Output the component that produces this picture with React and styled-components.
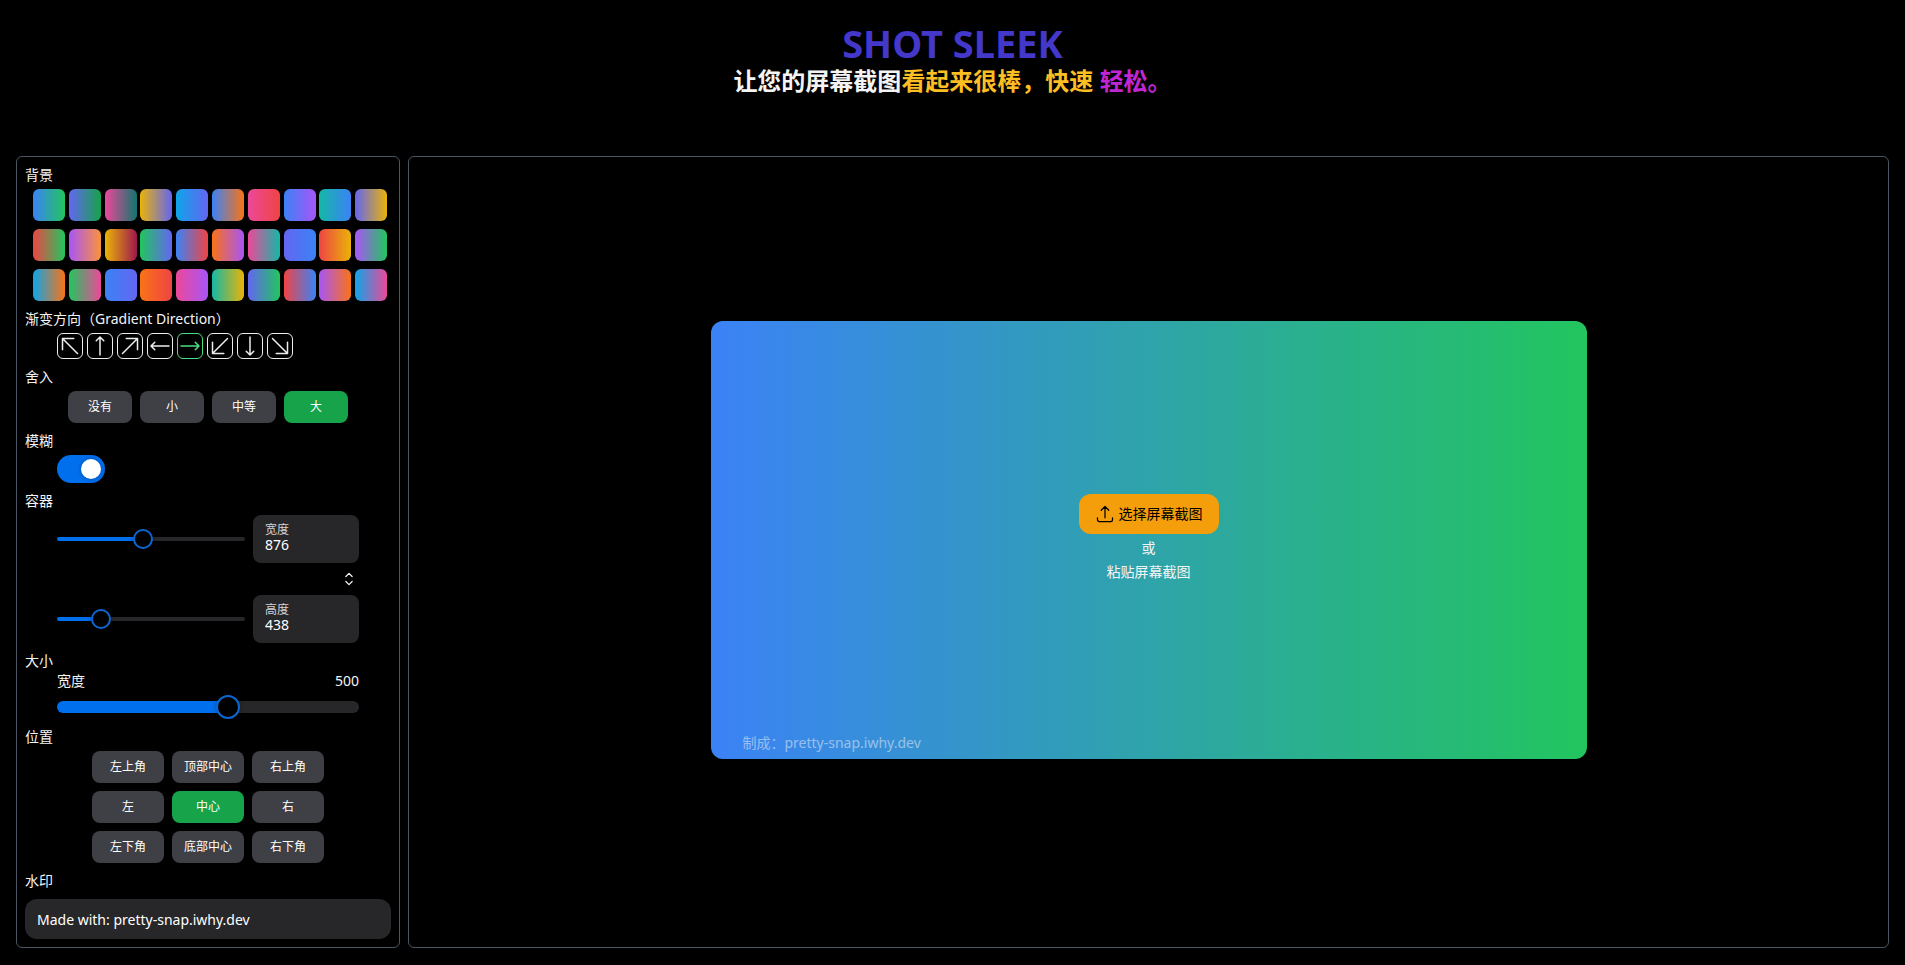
import React, { useState } from "react";
import styled, { createGlobalStyle } from "styled-components";

const GlobalStyle = createGlobalStyle`
  *, *::before, *::after { box-sizing: border-box; }
  body {
    margin: 0;
    background: #000;
    color: #f4f4f5;
    font-family: "Noto Sans", "Noto Sans CJK SC", sans-serif;
    font-size: 14px;
    line-height: 20px;
  }
  button, input { font: inherit; color: inherit; }
  h1, h2, p, fieldset { margin: 0; padding: 0; border: 0; min-width: 0; }
  button { cursor: pointer; padding: 0; border: 0; }
`;

const Page = styled.div`
  padding: 23px 16px 16px;
`;

const Header = styled.header`
  display: flex;
  flex-direction: column;
  align-items: center;
  margin-bottom: 57px;
  font-weight: 700;
`;

const Title = styled.h1`
  color: #4338ca;
  font-size: 38px;
  line-height: 40px;
  font-weight: 700;
`;

const Tagline = styled.h2`
  font-size: 24px;
  line-height: 36px;
  font-weight: 700;
`;

const Tint = styled.span`
  color: ${(p) => p.$color};
`;

const Workspace = styled.div`
  display: grid;
  grid-template-columns: 384px minmax(0, 1fr);
  gap: 8px;
`;

const Panel = styled.section`
  border: 1px solid #4b5563;
  border-radius: 6px;
`;

const Sidebar = styled(Panel)`
  display: flex;
  flex-direction: column;
  gap: 8px;
  padding: 8px;
`;

const Stage = styled(Panel)`
  display: flex;
  align-items: center;
  justify-content: center;
  padding-bottom: 24px;
`;

const Field = styled.fieldset`
  display: flex;
  flex-direction: column;
`;

const Legend = styled.legend`
  padding: 0;
  margin-bottom: ${(p) => p.$gap ?? 4}px;
`;

const Swatches = styled.div`
  display: grid;
  grid-template-columns: repeat(10, 1fr);
  row-gap: 8px;
  padding-left: 8px;
`;

const Swatch = styled.button`
  width: 32px;
  height: 32px;
  border-radius: 6px;
  background: linear-gradient(to right, ${(p) => p.$from}, ${(p) => p.$to});
`;

const Directions = styled.div`
  display: flex;
  gap: 4px;
  padding-left: 32px;
`;

const DirectionButton = styled.button`
  display: flex;
  width: 26px;
  height: 26px;
  border: 1px solid currentColor;
  border-radius: 6px;
  background: none;
  color: ${(p) => (p.$active ? "#4ade80" : "#ecedee")};
`;

const Options = styled.div`
  display: grid;
  grid-template-columns: repeat(${(p) => p.$columns}, ${(p) => p.$width}px);
  justify-content: center;
  gap: 8px;
`;

const OptionButton = styled.button`
  height: 32px;
  border-radius: 8px;
  background: ${(p) => (p.$active ? "#16a34a" : "#3f3f46")};
  color: #fff;
  font-size: 12px;
  line-height: 16px;
`;

const Indent = styled.div`
  display: flex;
  flex-direction: column;
  padding: 0 32px;
`;

const Switch = styled.input`
  appearance: none;
  display: flex;
  align-items: center;
  width: 48px;
  height: 28px;
  margin: 0;
  padding: 0 4px;
  border-radius: 14px;
  background: #3f3f46;
  cursor: pointer;

  &::before {
    content: "";
    width: 20px;
    height: 20px;
    border-radius: 50%;
    background: #fff;
    box-shadow: 0 0 5px rgba(0, 0, 0, 0.3);
  }
  &:checked {
    justify-content: flex-end;
    background: #006fee;
  }
`;

const Range = styled.input`
  --thumb: ${(p) => p.$thumb}px;
  --track: ${(p) => p.$track}px;
  --stop: calc(var(--thumb) / 2 + (100% - var(--thumb)) * var(--fill));
  appearance: none;
  flex: 1;
  min-width: 0;
  height: var(--thumb);
  margin: 0;
  background: none;
  cursor: pointer;

  &::-webkit-slider-runnable-track {
    height: var(--track);
    border-radius: 6px;
    background: linear-gradient(to right, #006fee var(--stop), #27272a var(--stop));
  }
  &::-webkit-slider-thumb {
    appearance: none;
    width: var(--thumb);
    height: var(--thumb);
    margin-top: calc((var(--track) - var(--thumb)) / 2);
    border: 2px solid #0d66cf;
    border-radius: 50%;
    background: #000;
    box-shadow: 0 0 5px rgba(0, 0, 0, 0.3);
  }
`;

const SizeRow = styled.div`
  display: flex;
  align-items: center;
  gap: 8px;
`;

const NumberBox = styled.label`
  display: flex;
  flex-direction: column;
  width: 106px;
  height: 48px;
  padding: 7px 12px;
  border-radius: 8px;
  background: #27272a;
  color: #d4d4d8;
  font-size: 12px;
  line-height: 16px;
`;

const NumberInput = styled.input`
  width: 100%;
  height: 14px;
  padding: 0;
  border: 0;
  outline: 0;
  background: none;
  color: #fff;
  font-size: 14px;
`;

const SwapButton = styled.button`
  display: flex;
  align-self: flex-end;
  margin: 6px 0;
  background: none;
`;

const SliderHead = styled.div`
  display: flex;
  justify-content: space-between;
  margin-bottom: 4px;
`;

const WideSlider = styled.div`
  display: flex;
`;

const WatermarkInput = styled.input`
  width: 100%;
  height: 40px;
  padding: 0 12px;
  border: 0;
  border-radius: 12px;
  outline: 0;
  background: #27272a;
  color: #fff;
`;

const Canvas = styled.div`
  position: relative;
  display: flex;
  flex-direction: column;
  align-items: center;
  justify-content: center;
  width: 876px;
  height: 438px;
  padding-bottom: 2px;
  border-radius: 12px;
  background: linear-gradient(to right, #3b82f6, #22c55e);
  line-height: 24px;
`;

const UploadButton = styled.button`
  display: flex;
  align-items: center;
  gap: 4px;
  height: 40px;
  margin-bottom: 2px;
  padding: 0 16px;
  border-radius: 12px;
  background: #f59e0b;
  color: #000;
`;

const CanvasMark = styled.p`
  position: absolute;
  left: 32px;
  bottom: 4px;
  opacity: 0.5;
`;

const Icon = ({ d, size = 24 }) => (
  <svg width={size} height={size} viewBox="0 0 24 24" fill="none" stroke="currentColor"
    strokeWidth="1.5" strokeLinecap="round" strokeLinejoin="round" aria-hidden="true">
    <path d={d} />
  </svg>
);

const c = {
  blue: "#3b82f6", green: "#22c55e", green6: "#16a34a", indigo: "#6366f1", pink: "#ec4899",
  teal: "#14b8a6", teal7: "#0f766e", yellow: "#eab308", sky: "#0ea5e9", orange: "#f97316",
  orange4: "#fb923c", red: "#ef4444", purple: "#a855f7", pink8: "#9d174d",
};

const gradients = [
  ["blue", "green"], ["indigo", "green6"], ["pink", "teal7"], ["yellow", "indigo"], ["sky", "indigo"],
  ["blue", "orange"], ["pink", "red"], ["blue", "purple"], ["teal", "blue"], ["indigo", "yellow"],
  ["red", "green"], ["purple", "orange4"], ["yellow", "pink8"], ["green", "indigo"], ["blue", "red"],
  ["orange", "purple"], ["pink", "teal"], ["indigo", "blue"], ["red", "yellow"], ["purple", "green"],
  ["sky", "orange"], ["green", "pink"], ["blue", "indigo"], ["orange", "red"], ["pink", "purple"],
  ["teal", "yellow"], ["indigo", "green"], ["red", "blue"], ["purple", "orange"], ["sky", "pink"],
];

const directions = [
  ["左上", "m19.5 19.5-15-15m0 0v11.25m0-11.25h11.25"],
  ["上", "M8.25 6.75 12 3m0 0 3.75 3.75M12 3v18"],
  ["右上", "m4.5 19.5 15-15m0 0H8.25m11.25 0v11.25"],
  ["左", "M6.75 15.75 3 12m0 0 3.75-3.75M3 12h18"],
  ["右", "M17.25 8.25 21 12m0 0-3.75 3.75M21 12H3"],
  ["左下", "m19.5 4.5-15 15m0 0h11.25m-11.25 0V8.25"],
  ["下", "M15.75 17.25 12 21m0 0-3.75-3.75M12 21V3"],
  ["右下", "m4.5 4.5 15 15m0 0V8.25m0 11.25H8.25"],
];

const roundings = ["没有", "小", "中等", "大"];
const positions = ["左上角", "顶部中心", "右上角", "左", "中心", "右", "左下角", "底部中心", "右下角"];

function Slider({ value, min, max, thumb, track, onChange, label }) {
  return (
    <Range type="range" aria-label={label} min={min} max={max} value={value} $thumb={thumb} $track={track}
      style={{ "--fill": (value - min) / (max - min) }} onChange={(e) => onChange(Number(e.target.value))} />
  );
}

function Dimension({ label, value, onChange }) {
  return (
    <SizeRow>
      <Slider label={label} min={80} max={1840} thumb={20} track={4} value={value} onChange={onChange} />
      <NumberBox>
        {label}
        <NumberInput inputMode="numeric" value={value} onChange={(e) => onChange(Number(e.target.value) || 0)} />
      </NumberBox>
    </SizeRow>
  );
}

export default function App() {
  const [direction, setDirection] = useState("右");
  const [rounding, setRounding] = useState("大");
  const [position, setPosition] = useState("中心");
  const [blur, setBlur] = useState(true);
  const [width, setWidth] = useState(876);
  const [height, setHeight] = useState(438);
  const [size, setSize] = useState(500);
  const [mark, setMark] = useState("Made with: pretty-snap.iwhy.dev");

  return (
    <Page lang="zh-CN">
      <GlobalStyle />
      <Header>
        <Title>SHOT SLEEK</Title>
        <Tagline>
          让您的屏幕截图<Tint $color="#fbbf24">看起来很棒，快速</Tint> <Tint $color="#c026d3">轻松。</Tint>
        </Tagline>
      </Header>
      <Workspace>
        <Sidebar>
          <Field>
            <Legend>背景</Legend>
            <Swatches>
              {gradients.map(([from, to]) => (
                <Swatch key={from + to} $from={c[from]} $to={c[to]} aria-label={`${from} ${to}`} />
              ))}
            </Swatches>
          </Field>
          <Field>
            <Legend>渐变方向（Gradient Direction）</Legend>
            <Directions>
              {directions.map(([name, d]) => (
                <DirectionButton key={name} aria-label={name} $active={name === direction} onClick={() => setDirection(name)}>
                  <Icon d={d} />
                </DirectionButton>
              ))}
            </Directions>
          </Field>
          <Field>
            <Legend>舍入</Legend>
            <Options $columns={4} $width={64}>
              {roundings.map((name) => (
                <OptionButton key={name} $active={name === rounding} onClick={() => setRounding(name)}>{name}</OptionButton>
              ))}
            </Options>
          </Field>
          <Field>
            <Legend as="label" htmlFor="blur">模糊</Legend>
            <Indent>
              <Switch id="blur" type="checkbox" role="switch" checked={blur} onChange={(e) => setBlur(e.target.checked)} />
            </Indent>
          </Field>
          <Field>
            <Legend>容器</Legend>
            <Indent>
              <Dimension label="宽度" value={width} onChange={setWidth} />
              <SwapButton aria-label="交换" onClick={() => { setWidth(height); setHeight(width); }}>
                <Icon size={20} d="M8.25 15 12 18.75 15.75 15m-7.5-6L12 5.25 15.75 9" />
              </SwapButton>
              <Dimension label="高度" value={height} onChange={setHeight} />
            </Indent>
          </Field>
          <Field>
            <Legend $gap={0}>大小</Legend>
            <Indent>
              <SliderHead>
                <span>宽度</span>
                <span>{size}</span>
              </SliderHead>
              <WideSlider>
                <Slider label="宽度" min={0} max={876} thumb={24} track={12} value={size} onChange={setSize} />
              </WideSlider>
            </Indent>
          </Field>
          <Field>
            <Legend>位置</Legend>
            <Options $columns={3} $width={72}>
              {positions.map((name) => (
                <OptionButton key={name} $active={name === position} onClick={() => setPosition(name)}>{name}</OptionButton>
              ))}
            </Options>
          </Field>
          <Field>
            <Legend as="label" htmlFor="watermark" $gap={8}>水印</Legend>
            <WatermarkInput id="watermark" value={mark} onChange={(e) => setMark(e.target.value)} />
          </Field>
        </Sidebar>
        <Stage>
          <Canvas>
            <UploadButton>
              <Icon size={20} d="M3 16.5v2.25A2.25 2.25 0 0 0 5.25 21h13.5A2.25 2.25 0 0 0 21 18.75V16.5m-13.5-9L12 3m0 0 4.5 4.5M12 3v13.5" />
              选择屏幕截图
            </UploadButton>
            <p>或</p>
            <p>粘贴屏幕截图</p>
            <CanvasMark>制成：pretty-snap.iwhy.dev</CanvasMark>
          </Canvas>
        </Stage>
      </Workspace>
    </Page>
  );
}
